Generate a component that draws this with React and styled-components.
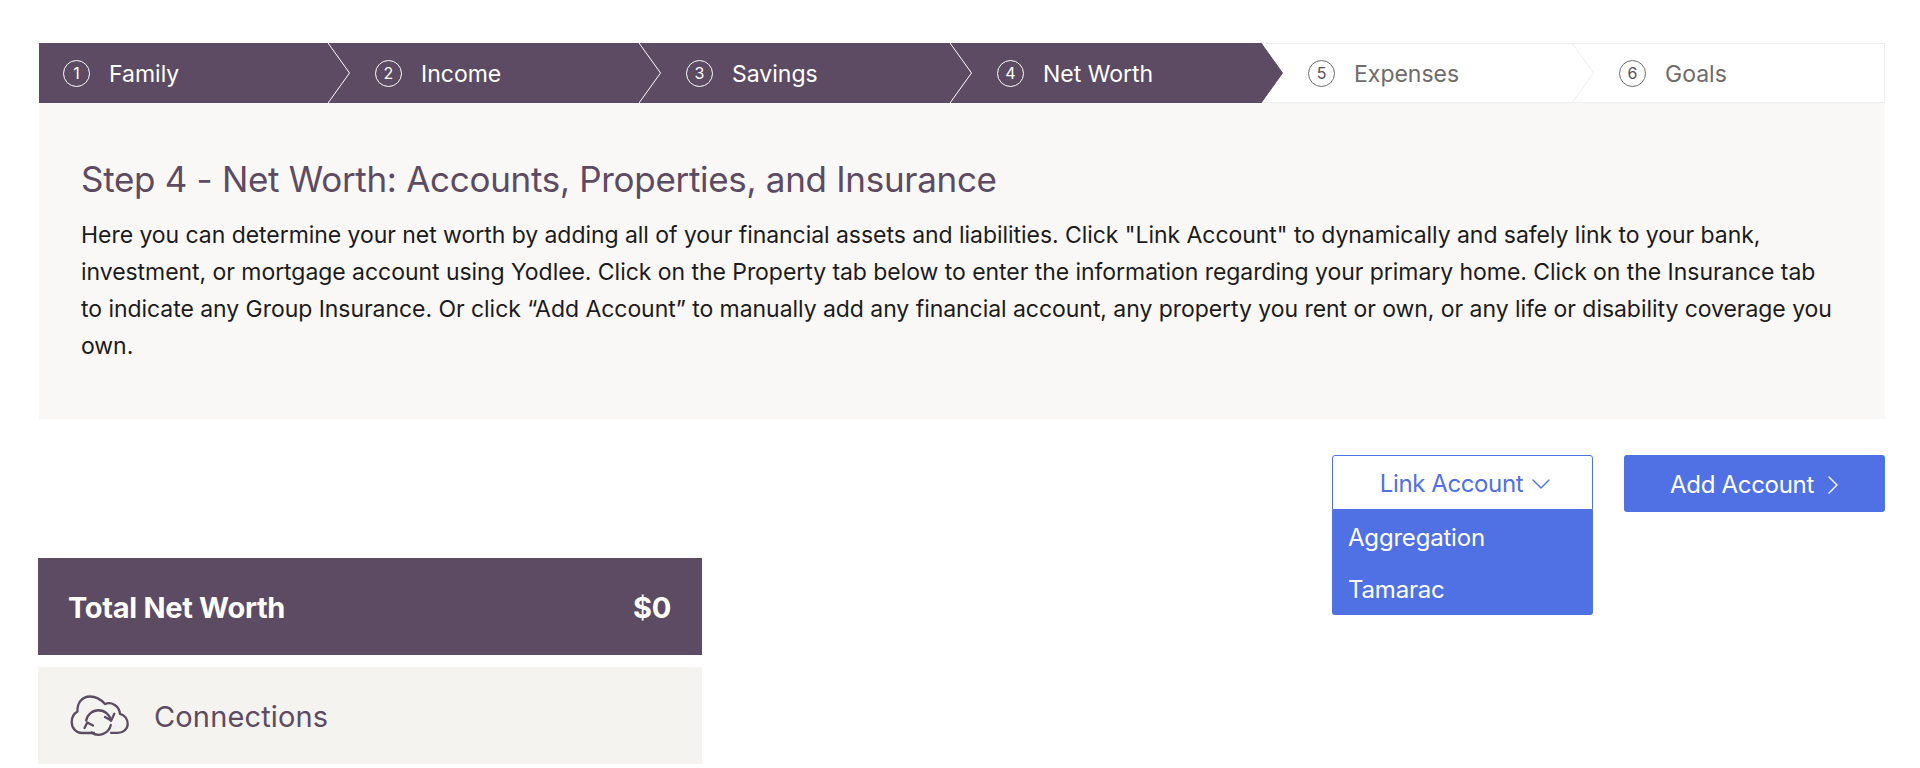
import styled, { createGlobalStyle } from 'styled-components'
import { ChevronDown, ChevronRight } from 'lucide-react'

const PURPLE = '#5c4b62'
const BLUE = '#5071e4'
const LINE = '#eeeeec'

const GlobalStyle = createGlobalStyle`
    html, body {
        margin: 0;
        background: #fff;
    }
    body {
        font-family: 'Inter', 'Liberation Sans', sans-serif;
        overflow: hidden;
    }
`

const Page = styled.div`
    padding: 43px 35px 0 39px;
`

const Stepper = styled.div`
    display: flex;
    height: 60px;
`

const Step = styled.div`
    position: relative;
    flex: ${props => props.$last ? '1' : '0 0 311px'};
    display: flex;
    align-items: center;
    padding-left: 25px;
    box-sizing: border-box;
    background: ${props => props.$done ? PURPLE : '#fff'};
    color: ${props => props.$done ? '#fff' : '#6f6b6c'};
    border-style: solid;
    border-color: ${LINE};
    border-width: ${props => props.$done ? '0' : '1px 0'};
    border-right-width: ${props => props.$last ? '1px' : '0'};

    &:first-child {
        padding-left: 24px;
    }
`

const StepNumber = styled.span`
    width: 27px;
    height: 27px;
    box-sizing: border-box;
    border: 1px solid ${props => props.$done ? '#fff' : '#6f6b6c'};
    border-radius: 50%;
    display: flex;
    align-items: center;
    justify-content: center;
    font-size: 16px;
    color: ${props => props.$done ? '#fff' : PURPLE};
    margin-right: 19px;
    flex: none;
`

const StepLabel = styled.span`
    font-size: 23px;
    padding-top: 2px;
`

const Arrow = styled.svg`
    position: absolute;
    right: 0;
    top: ${props => props.$done ? '0' : '-1px'};
    width: 22px;
    height: 60px;
    display: block;
`

const Intro = styled.section`
    background: #f9f8f6;
    height: 316px;
    box-sizing: border-box;
    padding: 54px 50px 0 42px;
`

const Heading = styled.h1`
    margin: 0 0 16px;
    font-size: 35px;
    line-height: 44px;
    font-weight: 400;
    letter-spacing: -0.3px;
    color: ${PURPLE};
`

const Copy = styled.p`
    margin: 0;
    font-size: 23px;
    line-height: 37px;
    letter-spacing: -0.05px;
    color: #1d1b1c;
`

const Toolbar = styled.div`
    display: flex;
    justify-content: flex-end;
    gap: 31px;
    margin-top: 36px;
`

const Dropdown = styled.div`
    position: relative;
    width: 261px;
`

const LinkButton = styled.button`
    width: 100%;
    height: 55px;
    box-sizing: border-box;
    padding: 2px 0 0 12px;
    background: #fff;
    border: 1px solid ${BLUE};
    border-radius: 3px 3px 0 0;
    color: ${BLUE};
    font: inherit;
    font-size: 24px;
    letter-spacing: -0.4px;
    display: flex;
    align-items: center;
    justify-content: center;
    gap: 2px;
`

const Menu = styled.div`
    position: absolute;
    top: 55px;
    left: 0;
    right: 0;
    height: 105px;
    box-sizing: border-box;
    padding-top: 2px;
    background: ${BLUE};
    border-radius: 0 0 3px 3px;
    color: #fff;
    display: flex;
    flex-direction: column;
    gap: 1px;
`

const MenuItem = styled.div`
    height: 51px;
    display: flex;
    align-items: center;
    padding-left: 16px;
    font-size: 24px;
    letter-spacing: -0.2px;
`

const AddButton = styled.button`
    width: 261px;
    height: 57px;
    padding: 2px 0 0 10px;
    background: ${BLUE};
    border: 0;
    border-radius: 3px;
    color: #fff;
    font: inherit;
    font-size: 24px;
    letter-spacing: -0.3px;
    display: flex;
    align-items: center;
    justify-content: center;
    gap: 3px;
`

const Summary = styled.div`
    width: 664px;
    margin-top: 46px;
    margin-left: -1px;
`

const TotalRow = styled.div`
    height: 97px;
    box-sizing: border-box;
    padding: 2px 31px 0 30px;
    background: ${PURPLE};
    color: #fff;
    display: flex;
    align-items: center;
    justify-content: space-between;
    font-size: 29px;
    font-weight: 700;
    letter-spacing: -0.3px;
`

const ConnectionsRow = styled.div`
    height: 97px;
    margin-top: 12px;
    box-sizing: border-box;
    padding: 0 0 0 31px;
    background: #f4f3ef;
    color: ${PURPLE};
    display: flex;
    align-items: center;
    gap: 25px;
    font-size: 29px;
    letter-spacing: 0.15px;

    span {
        padding-top: 2px;
    }
`

const steps = ['Family', 'Income', 'Savings', 'Net Worth', 'Expenses', 'Goals']
const activeCount = 4

function StepArrow({ index }) {
    const done = index < activeCount
    const nextDone = index + 1 < activeCount
    const stroke = done ? (nextDone ? '#fff' : PURPLE) : LINE

    return (
        <Arrow $done={done} viewBox="0 0 22 60" preserveAspectRatio="none">
            <rect x="0" y="0" width="22" height="60" fill={nextDone ? PURPLE : '#fff'} />
            {!nextDone && <path d="M0 0.5 H22 M0 59.5 H22" stroke={LINE} strokeWidth="1" />}
            <polygon points="0,0 21.5,30 0,60" fill={done ? PURPLE : '#fff'} />
            <polyline points="0,0 21.5,30 0,60" fill="none" stroke={stroke} strokeWidth="1" />
        </Arrow>
    )
}

function CloudSync() {
    return (
        <svg width="60" height="42" viewBox="0 0 60 42" fill="none" stroke={PURPLE} strokeWidth="2.3" strokeLinecap="round" strokeLinejoin="round">
            <path d="M25 38 H13 C7 38 2.7 33 2.7 27 C2.7 22 5 18.5 8.5 16.5 C8 8 13 1.5 21 1.5 C27 1.5 32 4.5 36 9 C42 6.5 50 10 51 18.8 C55.5 20 58.7 24 58.7 29 C58.7 34 54 37.8 49 37.8 H42" />
            <path d="M17.2 25.5 A12.5 12.5 0 0 1 41.8 25.5" />
            <path d="M45.3 18.8 L42.2 25.5 L36 22" />
            <path d="M41.8 30 A12.5 12.5 0 0 1 22.5 37.5" />
            <path d="M15.5 33 L18.3 27.5 L24 30.5" />
        </svg>
    )
}

export default function App() {
    return (
        <Page>
            <GlobalStyle />
            <Stepper>
                {steps.map((label, i) => {
                    const done = i < activeCount
                    const last = i === steps.length - 1
                    return (
                        <Step key={label} $done={done} $last={last}>
                            <StepNumber $done={done}>{i + 1}</StepNumber>
                            <StepLabel>{label}</StepLabel>
                            {!last && <StepArrow index={i} />}
                        </Step>
                    )
                })}
            </Stepper>
            <Intro>
                <Heading>Step 4 - Net Worth: Accounts, Properties, and Insurance</Heading>
                <Copy>
                    Here you can determine your net worth by adding all of your financial assets and liabilities. Click "Link Account" to dynamically and safely link to your bank, investment, or mortgage account using Yodlee. Click on the Property tab below to enter the information regarding your primary home. Click on the Insurance tab to indicate any Group Insurance. Or click “Add Account” to manually add any financial account, any property you rent or own, or any life or disability coverage you own.
                </Copy>
            </Intro>
            <Toolbar>
                <Dropdown>
                    <LinkButton>
                        Link Account
                        <ChevronDown size={32} strokeWidth={1} />
                    </LinkButton>
                    <Menu>
                        <MenuItem>Aggregation</MenuItem>
                        <MenuItem>Tamarac</MenuItem>
                    </Menu>
                </Dropdown>
                <AddButton>
                    Add Account
                    <ChevronRight size={32} strokeWidth={1} />
                </AddButton>
            </Toolbar>
            <Summary>
                <TotalRow>
                    <span>Total Net Worth</span>
                    <span>$0</span>
                </TotalRow>
                <ConnectionsRow>
                    <CloudSync />
                    <span>Connections</span>
                </ConnectionsRow>
            </Summary>
        </Page>
    )
}
